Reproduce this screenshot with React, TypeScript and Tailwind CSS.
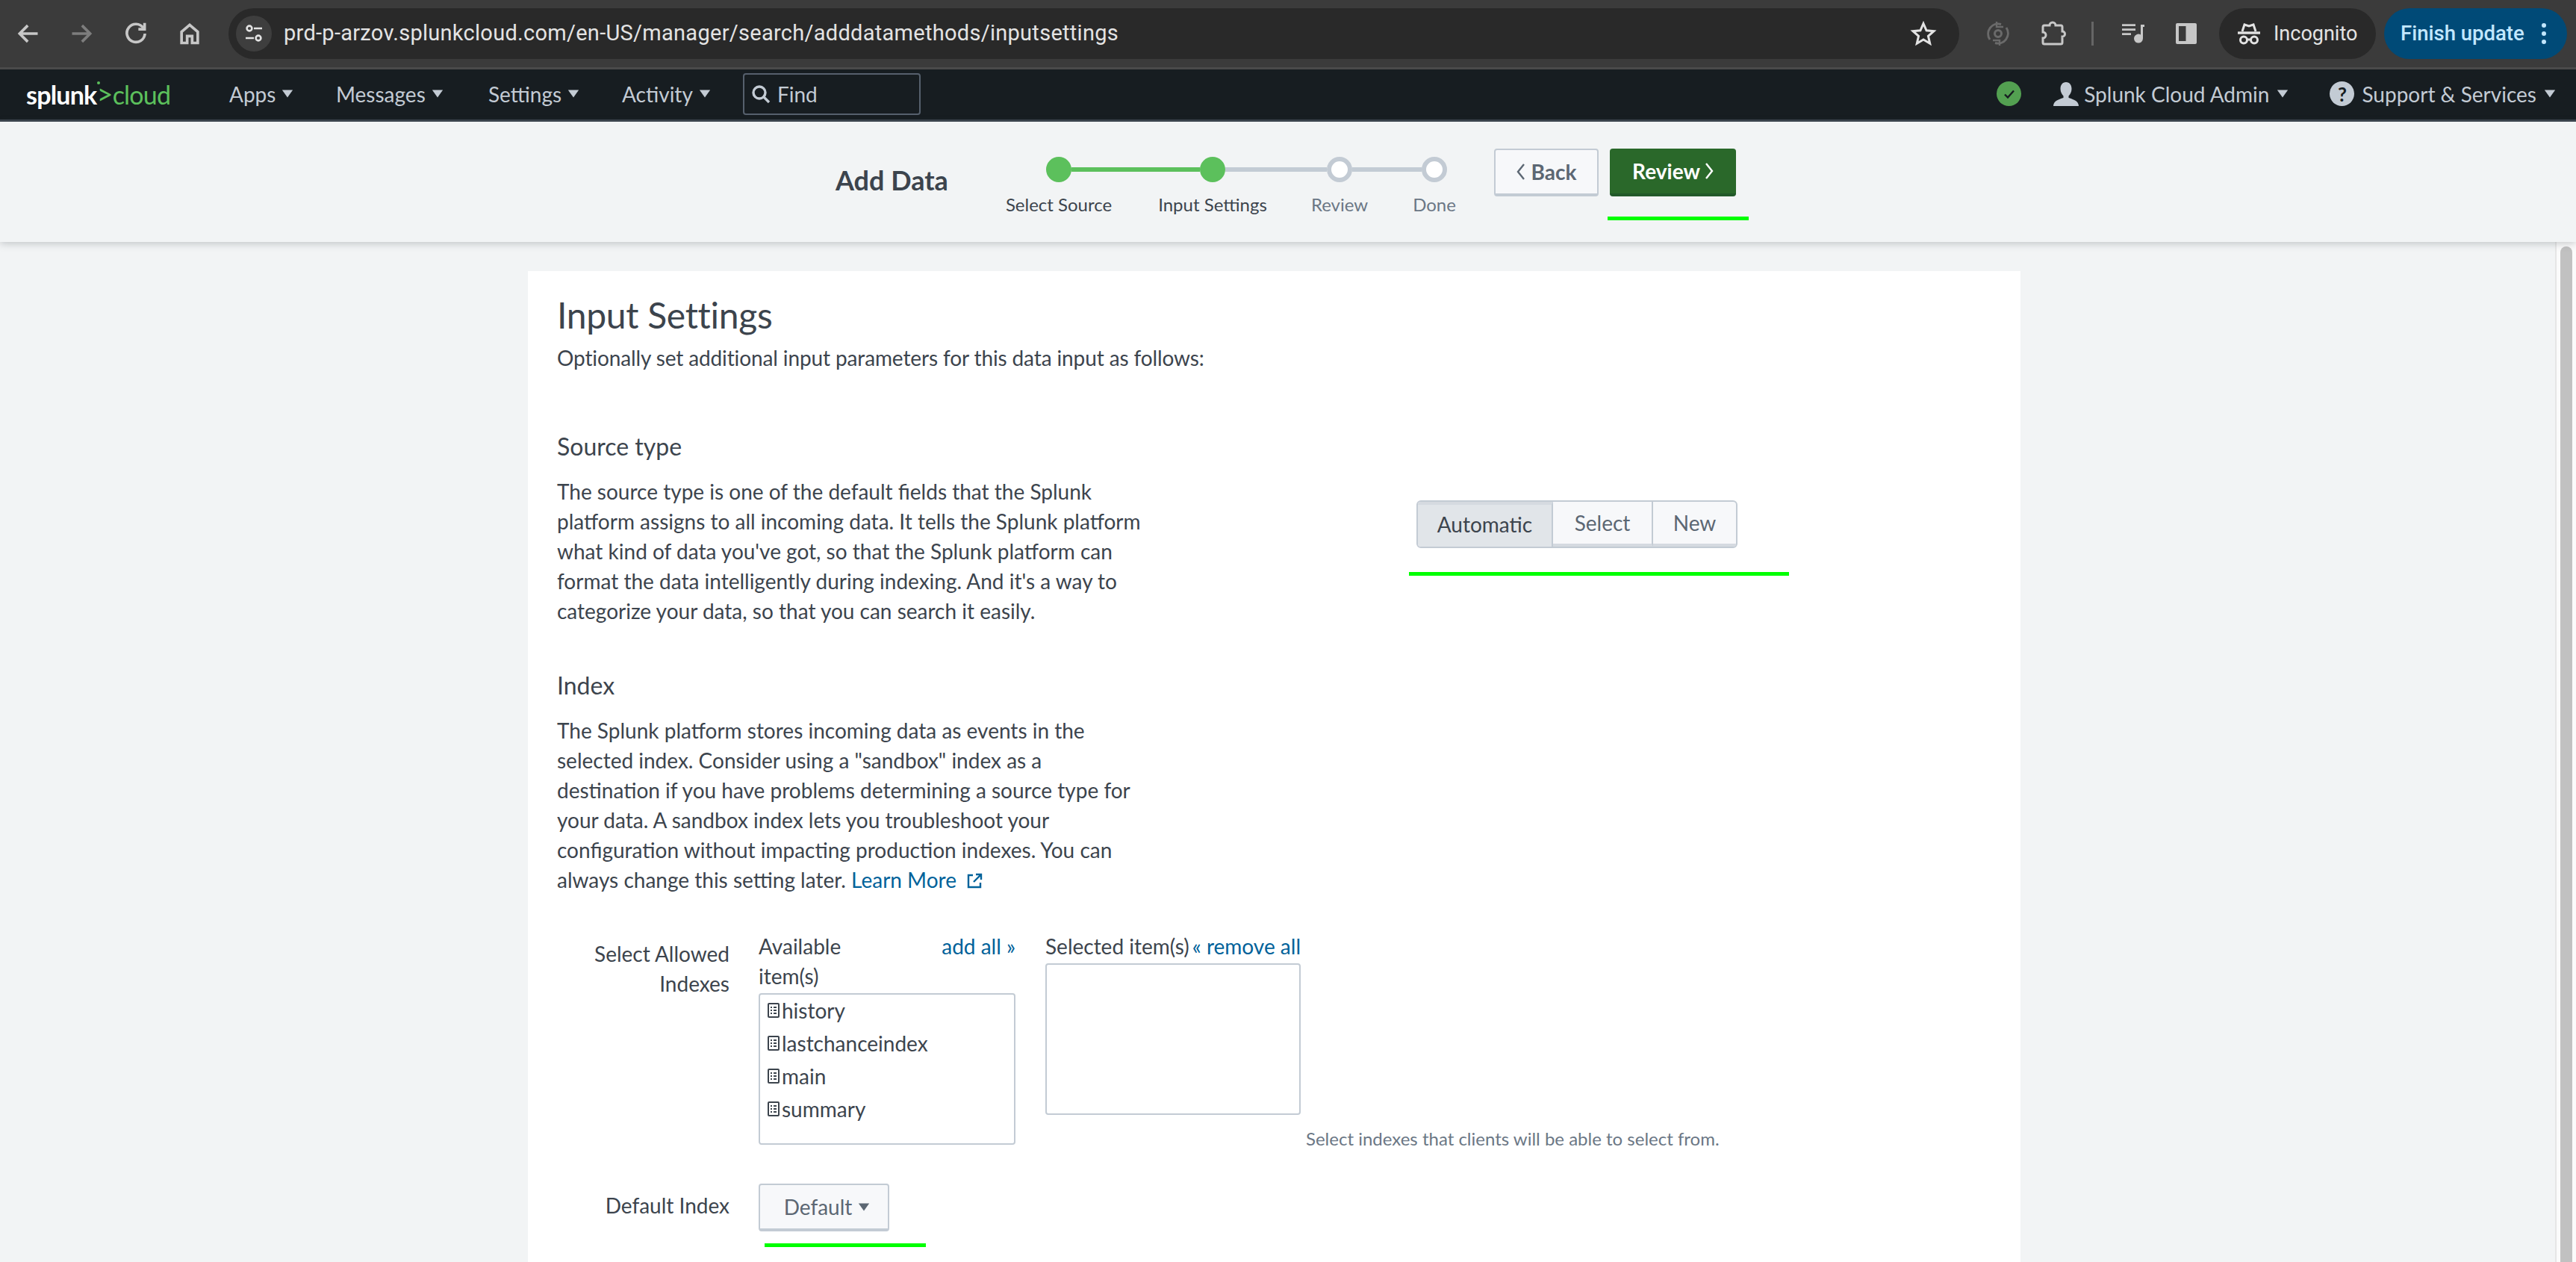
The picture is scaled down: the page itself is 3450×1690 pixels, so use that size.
import type { ReactNode } from 'react';

const uiFont = { fontFamily: 'Lato, "Liberation Sans", sans-serif' };

function Caret({ className }: { className?: string }) {
  return (
    <svg viewBox="0 0 14 10" className={className ?? 'h-[11px] w-[16px]'} fill="currentColor">
      <path d="M0.5 0.5h13L7 9.5z" />
    </svg>
  );
}

function ChromeIcon({ children, className }: { children: ReactNode; className: string }) {
  return (
    <svg viewBox="0 0 48 48" className={className} fill="none" stroke="currentColor" strokeWidth="4.4">
      {children}
    </svg>
  );
}

function BrowserBar() {
  return (
    <div className="flex h-[93px] items-center border-b-[3px] border-[#4a4a4a] bg-[#3b3b3b] text-[#c7c7c7]">
      <div className="flex w-[306px] items-center">
        <ChromeIcon className="ml-[18px] h-[40px] w-[40px]">
          <path d="M39 24H11M23 11 10 24l13 13" />
        </ChromeIcon>
        <ChromeIcon className="ml-[31px] h-[40px] w-[40px] text-[#7d7d7d]">
          <path d="M9 24h28M25 11l13 13-13 13" />
        </ChromeIcon>
        <ChromeIcon className="ml-[33px] h-[40px] w-[40px]">
          <path d="M36 15a14.5 14.5 0 1 0 2.5 9" />
          <path d="M38 7v10H28" />
        </ChromeIcon>
        <ChromeIcon className="ml-[32px] h-[40px] w-[40px]">
          <path d="M11 21v18h9V28h8v11h9V21L24 10z" />
        </ChromeIcon>
      </div>
      <div className="flex h-[68px] w-[2318px] items-center rounded-[34px] bg-[#292929] pl-[10px]">
        <div className="flex h-[48px] w-[48px] items-center justify-center rounded-full bg-[#3e3e3e]">
          <svg viewBox="0 0 28 28" className="h-[28px] w-[28px] text-[#e3e3e3]" fill="none" stroke="currentColor" strokeWidth="2.6">
            <circle cx="8" cy="7" r="3.4" />
            <path d="M14 7h11M3 20h11" />
            <circle cx="20" cy="20" r="3.4" />
          </svg>
        </div>
        <span className="ml-[16px] font-['Roboto'] text-[29px] tracking-[0.28px] text-[#e3e3e3]">
          prd-p-arzov.splunkcloud.com/en-US/manager/search/adddatamethods/inputsettings
        </span>
        <svg viewBox="0 0 24 24" className="ml-auto mr-[30px] h-[36px] w-[36px] text-[#e3e3e3]" fill="none" stroke="currentColor" strokeWidth="2">
          <path d="m12 3 2.7 6.2 6.6.6-5 4.4 1.5 6.6L12 17.3l-5.8 3.5 1.500-6.6-5-4.4 6.6-.6z" />
        </svg>
      </div>
      <svg viewBox="0 0 36 36" className="ml-[34px] h-[36px] w-[36px] text-[#6a6a6a]" fill="none" stroke="currentColor" strokeWidth="3">
        <path d="M7 26A13.500 13.500 0 0 1 22 5.500M29 10a13.500 13.500 0 0 1-15 20.500" />
        <path d="M16 2v7h9M20 34v-7h-9" strokeWidth="2.4" />
        <circle cx="18" cy="18" r="4.500" />
      </svg>
      <svg viewBox="0 0 36 36" className="ml-[38px] h-[36px] w-[36px]" fill="none" stroke="currentColor" strokeWidth="3">
        <path d="M6 7h7a4 4 0 0 1 8 0h7a2 2 0 0 1 2 2v6a3.500 3.500 0 0 1 0 7v8a2 2 0 0 1-2 2H6a2 2 0 0 1-2-2v-6a4 4 0 0 0 0-8V9a2 2 0 0 1 2-2z" />
      </svg>
      <div className="ml-[33px] h-[32px] w-[3px] bg-[#666666]" />
      <svg viewBox="0 0 36 36" className="ml-[35px] h-[36px] w-[36px]" fill="currentColor">
        <path d="M3 5.300h18V8H3zM3 11.300h18V14H3zM3 17.300h12V20H3z" />
        <path d="M28 6h5v3h-2v15.500a6 6 0 1 1-3-5.100z" />
      </svg>
      <svg viewBox="0 0 36 36" className="ml-[35px] h-[36px] w-[36px]" fill="currentColor">
        <path fillRule="evenodd" d="M6 4h24a2 2 0 0 1 2 2v24a2 2 0 0 1-2 2H6a2 2 0 0 1-2-2V6a2 2 0 0 1 2-2zm2 4v20h9.500V8z" />
      </svg>
      <div className="ml-[26px] flex h-[68px] w-[210px] items-center rounded-[34px] bg-[#292929] pl-[22px] text-[#e3e3e3]">
        <svg viewBox="0 0 36 36" className="h-[36px] w-[36px]" fill="none" stroke="currentColor" strokeWidth="3">
          <path d="M9 15 12 6l6 2 6-2 3 9" />
          <path d="M3 17h30" strokeWidth="3.400" />
          <circle cx="11" cy="26.500" r="4.500" />
          <circle cx="25" cy="26.500" r="4.500" />
          <path d="M15.500 26h5" />
        </svg>
        <span className="ml-[15px] font-['Roboto'] text-[27px]">Incognito</span>
      </div>
      <div className="ml-[11px] flex h-[68px] w-[245px] items-center rounded-[34px] bg-[#004a77] pl-[22px] text-[#c2e7ff]">
        <span className="font-['Roboto'] text-[27.500px] font-medium">Finish update</span>
        <div className="ml-[23px] flex flex-col gap-[5px]">
          <span className="h-[6px] w-[6px] rounded-full bg-[#c2e7ff]" />
          <span className="h-[6px] w-[6px] rounded-full bg-[#c2e7ff]" />
          <span className="h-[6px] w-[6px] rounded-full bg-[#c2e7ff]" />
        </div>
      </div>
    </div>
  );
}

function NavItem({ label, width }: { label: string; width: string }) {
  return (
    <div className={`flex items-center gap-[8px] ${width}`}>
      <span>{label}</span>
      <Caret />
    </div>
  );
}

function SplunkBar() {
  return (
    <div className="flex h-[70px] items-center border-b-[3px] border-[#3c444d] bg-[#171d21] pb-[2px] text-[28px] text-[#c3cbd4]">
      <div className="ml-[35px] flex w-[272px] items-baseline whitespace-nowrap text-[34px] leading-none tracking-[-0.8px]">
        <span className="font-bold text-white">splunk</span>
        <span className="relative text-[38px] leading-[34px] text-[#5cc05c]">
          &gt;
          <span className="absolute left-[1px] top-[1px] h-[4px] w-[4px] rounded-full bg-[#5cc05c]" />
        </span>
        <span className="text-[#5cc05c]">cloud</span>
      </div>
      <NavItem label="Apps" width="w-[143px]" />
      <NavItem label="Messages" width="w-[204px]" />
      <NavItem label="Settings" width="w-[179px]" />
      <NavItem label="Activity" width="w-[162px]" />
      <div className="flex h-[56px] w-[238px] items-center rounded-[4px] border-2 border-[#56606d] pl-[8px]">
        <svg viewBox="0 0 28 28" className="h-[28px] w-[28px]" fill="none" stroke="currentColor" strokeWidth="3.4">
          <circle cx="12" cy="12" r="8" />
          <path d="m18 18 7 7" />
        </svg>
        <span className="ml-[8px]">Find</span>
      </div>
      <div className="ml-auto flex items-center pr-[27px]">
        <div className="flex h-[33px] w-[33px] items-center justify-center rounded-full bg-[#53a051]">
          <svg viewBox="0 0 20 20" className="h-[20px] w-[20px] text-[#171d21]" fill="none" stroke="currentColor" strokeWidth="2.4">
            <path d="m4 10.500 4 4 8-9" />
          </svg>
        </div>
        <svg viewBox="0 0 34 32" className="ml-[43px] h-[32px] w-[34px]" fill="currentColor">
          <path d="M17 0c5 0 7.500 4 7.500 9 0 4-2 7.500-4 9.500V21c4 1.500 13.500 3.500 13.500 11H0c0-7.500 9.500-9.500 13.500-11v-2.500c-2-2-4-5.500-4-9.500 0-5 2.500-9 7.500-9z" />
        </svg>
        <span className="ml-[7px]">Splunk Cloud Admin</span>
        <Caret className="ml-[10px] h-[11px] w-[16px]" />
        <div className="ml-[55px] flex h-[33px] w-[33px] items-center justify-center rounded-full bg-[#c3cbd4] text-[26px] font-bold leading-none text-[#171d21]">
          ?
        </div>
        <span className="ml-[10px]">Support &amp; Services</span>
        <Caret className="ml-[10px] h-[11px] w-[16px]" />
      </div>
    </div>
  );
}

const steps = [
  { label: 'Select Source', done: true },
  { label: 'Input Settings', done: true },
  { label: 'Review', done: false },
  { label: 'Done', done: false }
];

function Step({ label, done }: { label: string; done: boolean }) {
  return (
    <div className="flex w-[34px] flex-col items-center">
      <div className={`h-[34px] w-[34px] rounded-full ${done ? 'bg-[#5cc05c]' : 'border-[6px] border-[#c3cbd4] bg-white'}`} />
      <span className={`mt-[14px] whitespace-nowrap text-[24px] leading-[32px] ${done ? 'text-[#3c444d]' : 'text-[#6b7785]'}`}>{label}</span>
    </div>
  );
}

function AddDataHeader() {
  return (
    <div className="relative z-10 flex h-[161px] items-start bg-[#f2f4f5] pl-[1119px] shadow-[0_2px_10px_rgba(60,68,77,0.28)]">
      <div className="mt-[56px] w-[282px] text-[36px] font-bold leading-[44px] text-[#3c444d]">Add Data</div>
      <div className="mt-[47px] flex items-start">
        <Step {...steps[0]} />
        <div className="mt-[14px] h-[6px] w-[172px] bg-[#5cc05c]" />
        <Step {...steps[1]} />
        <div className="mt-[14px] h-[6px] w-[136px] bg-[#c3cbd4]" />
        <Step {...steps[2]} />
        <div className="mt-[14px] h-[6px] w-[93px] bg-[#c3cbd4]" />
        <Step {...steps[3]} />
      </div>
      <button className="ml-[63px] mt-[36px] flex h-[64px] w-[140px] items-center justify-center gap-[8px] rounded-[4px] border-2 border-b-[4px] border-[#c3cbd4] bg-[#f7f8fa] text-[28px] font-bold text-[#5c6773]">
        <svg viewBox="0 0 12 24" className="h-[24px] w-[12px]" fill="none" stroke="currentColor" strokeWidth="2.4">
          <path d="M10 2 2 12l8 10" />
        </svg>
        Back
      </button>
      <div className="ml-[15px] mt-[36px] flex flex-col">
        <button className="flex h-[64px] w-[169px] items-center justify-center gap-[6px] rounded-[4px] border-b-[4px] border-[#22592a] bg-[#2a682a] text-[28px] font-bold text-white">
          Review
          <svg viewBox="0 0 12 24" className="h-[24px] w-[12px]" fill="none" stroke="currentColor" strokeWidth="2.4">
            <path d="m2 2 8 10-8 10" />
          </svg>
        </button>
        <div className="ml-[-3px] mt-[27px] h-[5px] w-[189px] bg-[#00ff00]" />
      </div>
    </div>
  );
}

function IndexItem({ name }: { name: string }) {
  return (
    <div className="flex h-[44px] items-center pb-[3px]">
      <svg viewBox="0 0 16 20" className="ml-[10px] h-[20px] w-[16px] text-[#3c444d]" fill="none" stroke="currentColor" strokeWidth="2">
        <rect x="1" y="1" width="14" height="18" rx="1" />
        <path d="M4 6h2M8 6h4M4 10h2M8 10h4M4 14h2M8 14h4" />
      </svg>
      <span className="ml-[3px] text-[#3c444d]">{name}</span>
    </div>
  );
}

function InputSettings() {
  return (
    <div className="ml-[707px] h-[1327px] w-[1999px] bg-white pl-[39px] pt-[31px] text-[28px] leading-[40px] text-[#3c444d]">
      <h1 className="text-[48px] leading-[56px] tracking-[-0.3px]">Input Settings</h1>
      <p className="mt-[9px] tracking-[-0.12px]">Optionally set additional input parameters for this data input as follows:</p>

      <h2 className="mt-[79px] text-[32px]">Source type</h2>
      <div className="mt-[20px] flex items-start">
        <p className="w-[1141px]">
          The source type is one of the default fields that the Splunk
          <br />
          platform assigns to all incoming data. It tells the Splunk platform
          <br />
          what kind of data you've got, so that the Splunk platform can
          <br />
          format the data intelligently during indexing. And it's a way to
          <br />
          categorize your data, so that you can search it easily.
        </p>
        <div className="mt-[32px] w-[509px]">
          <div className="ml-[10px] flex h-[64px] w-[430px] overflow-hidden rounded-[6px] border-2 border-[#c3cbd4] bg-[#f7f8fa] text-[#5c6773]">
            <div className="flex w-[181px] items-center justify-center border-r-2 border-[#c3cbd4] border-t-[4px] border-t-[#d5dae0] bg-[#e1e5e9] pb-[4px] text-[#3c444d]">Automatic</div>
            <div className="flex w-[134px] items-center justify-center border-r-2 border-[#c3cbd4] border-b-[4px] border-b-[#d5dae0]">Select</div>
            <div className="flex flex-1 items-center justify-center border-b-[4px] border-[#d5dae0]">New</div>
          </div>
          <div className="mt-[32px] h-[5px] w-[509px] bg-[#00ff00]" />
        </div>
      </div>

      <h2 className="mt-[60px] text-[32px]">Index</h2>
      <p className="mt-[20px]">
        The Splunk platform stores incoming data as events in the
        <br />
        selected index. Consider using a "sandbox" index as a
        <br />
        destination if you have problems determining a source type for
        <br />
        your data. A sandbox index lets you troubleshoot your
        <br />
        configuration without impacting production indexes. You can
        <br />
        always change this setting later.{' '}
        <span className="text-[#00629a]">Learn More</span>
        <svg viewBox="0 0 24 24" className="ml-[12px] inline h-[24px] w-[24px] align-[-3px] text-[#00629a]" fill="none" stroke="currentColor" strokeWidth="2.4">
          <path d="M10 4H4v16h16v-6M14 3h7v7M21 3 11 13" />
        </svg>
      </p>

      <div className="mt-[49px] flex items-start">
        <div className="mt-[10px] w-[231px] text-right">
          Select Allowed
          <br />
          Indexes
        </div>
        <div className="ml-[39px] w-[344px]">
          <div className="flex items-start justify-between pb-[3px]">
            <span className="w-[150px]">Available item(s)</span>
            <span className="text-[#00629a]">add all »</span>
          </div>
          <div className="h-[203px] rounded-[4px] border-2 border-[#c3cbd4]">
            <IndexItem name="history" />
            <IndexItem name="lastchanceindex" />
            <IndexItem name="main" />
            <IndexItem name="summary" />
          </div>
        </div>
        <div className="ml-[40px] w-[342px]">
          <div className="flex justify-between whitespace-nowrap pb-[3px]">
            <span>Selected item(s)</span>
            <span className="text-[#00629a]">« remove all</span>
          </div>
          <div className="h-[203px] rounded-[4px] border-2 border-[#c3cbd4]" />
        </div>
        <div className="ml-[7px] mt-[262px] whitespace-nowrap text-[24px] leading-[32px] text-[#6b7785]">
          Select indexes that clients will be able to select from.
        </div>
      </div>

      <div className="mt-[44px] flex items-start">
        <div className="mt-[9px] w-[231px] text-right">Default Index</div>
        <div className="ml-[39px]">
          <button className="flex h-[64px] w-[175px] items-center justify-center gap-[8px] rounded-[4px] border-2 border-b-[4px] border-[#c3cbd4] bg-[#f7f8fa] pl-[8px] text-[#5c6773]">
            Default
            <Caret />
          </button>
          <div className="ml-[8px] mt-[16px] h-[5px] w-[216px] bg-[#00ff00]" />
        </div>
      </div>
    </div>
  );
}

export default function App() {
  return (
    <div className="flex h-[1690px] w-[3450px] flex-col overflow-hidden bg-[#f2f4f5]" style={uiFont}>
      <BrowserBar />
      <SplunkBar />
      <AddDataHeader />
      <div className="flex flex-1 overflow-hidden pt-[39px]">
        <InputSettings />
        <div className="ml-auto mt-[-39px] flex w-[28px] justify-center border-l-2 border-[#e6e6e6] bg-[#fbfbfb] pt-[6px]">
          <div className="h-[1400px] w-[16px] rounded-full bg-[#c1c1c1]" />
        </div>
      </div>
    </div>
  );
}
